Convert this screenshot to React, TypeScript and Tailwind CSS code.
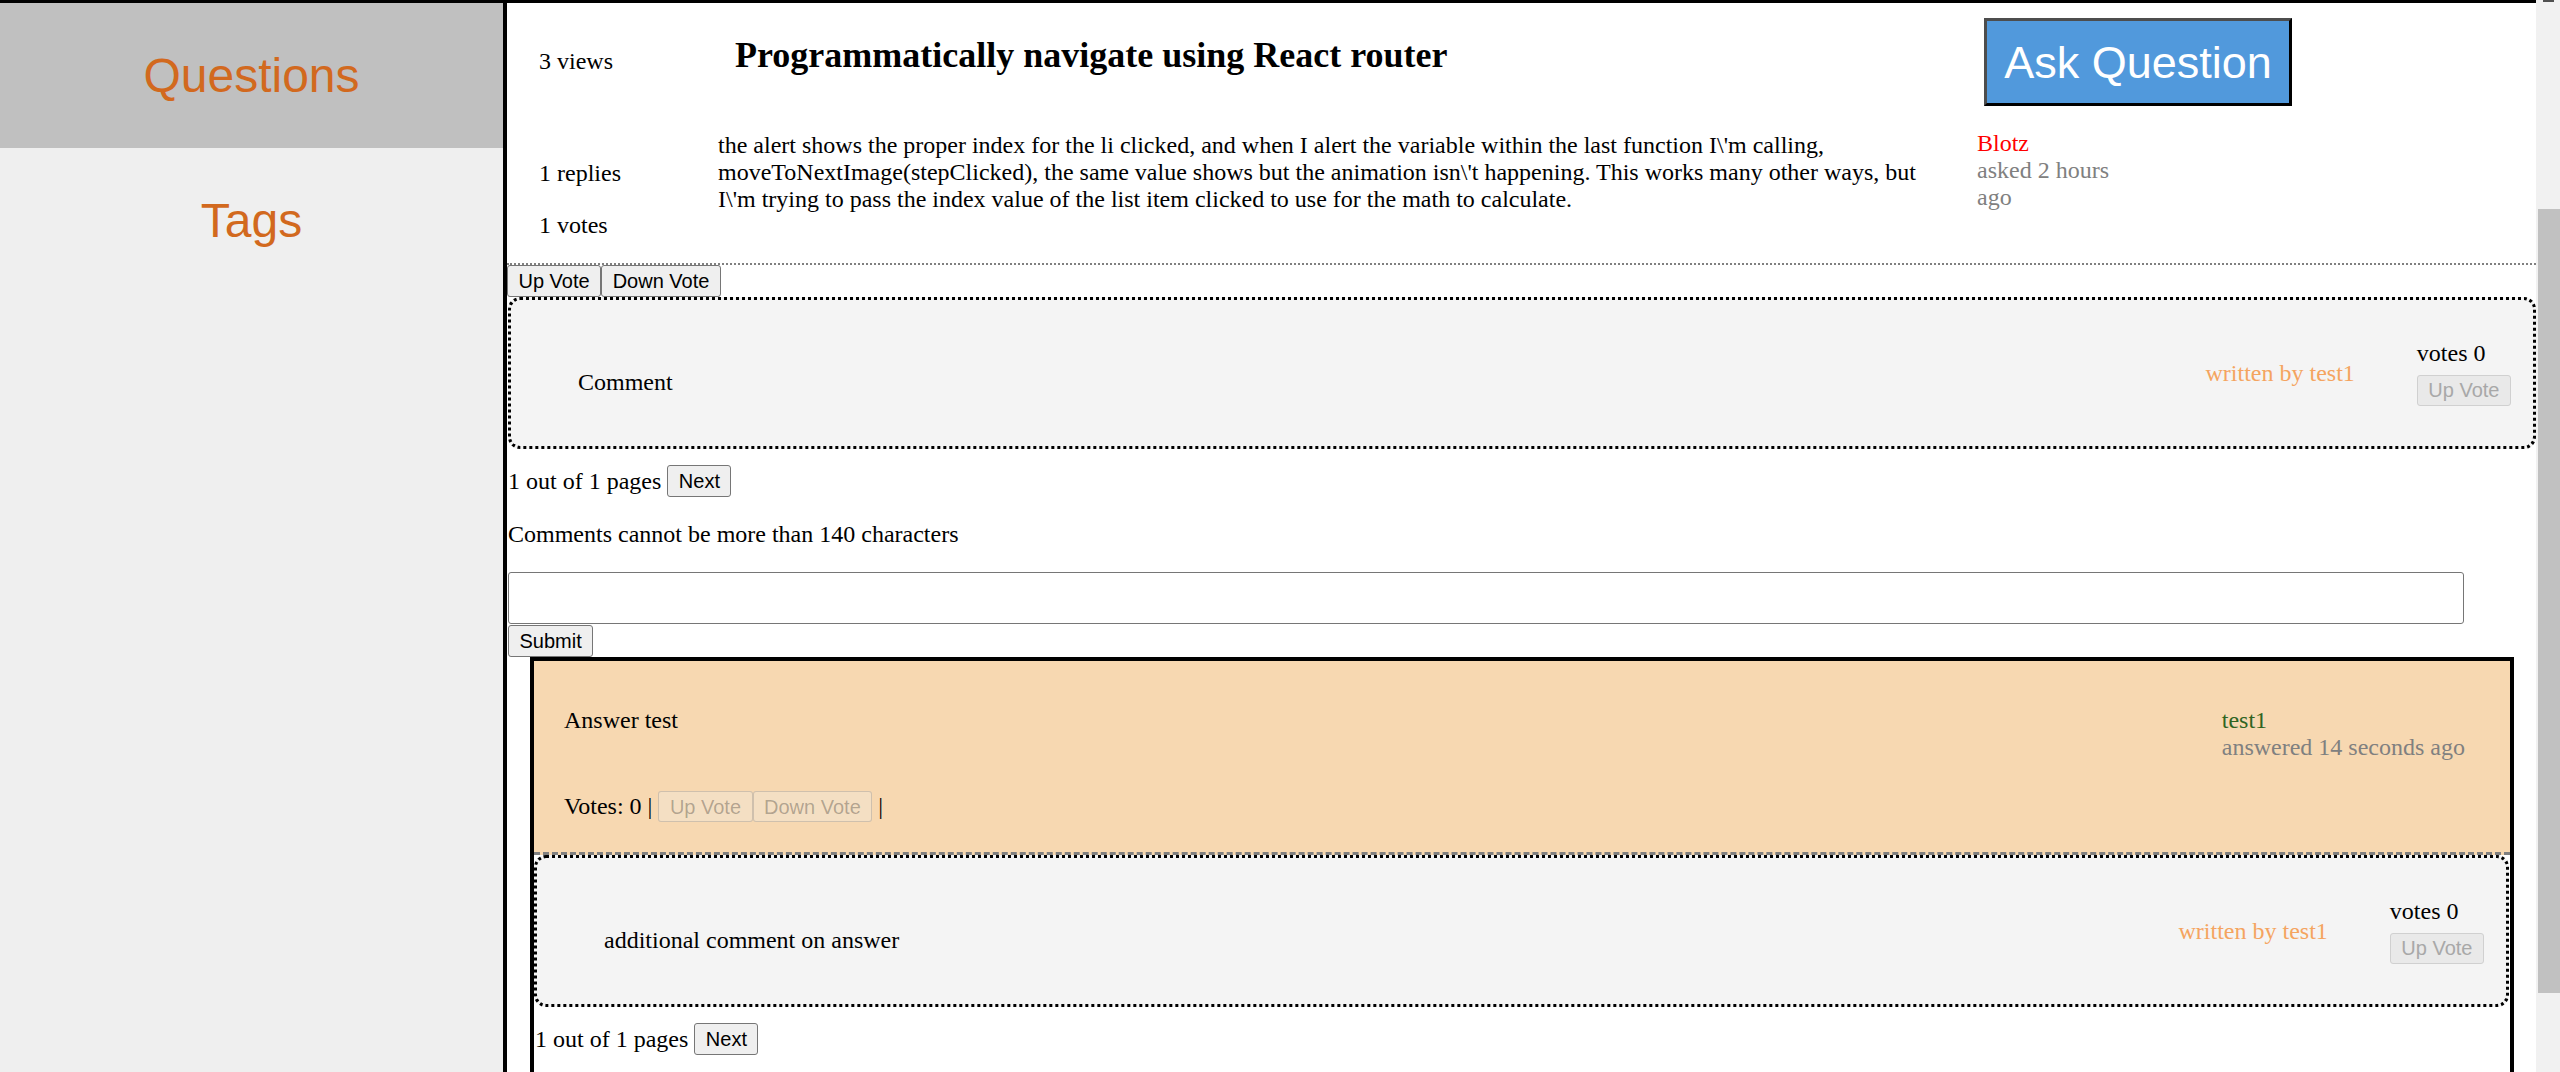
import type { ReactNode } from "react";

const body =
  "the alert shows the proper index for the li clicked, and when I alert the variable within the last function I\\'m calling, moveToNextImage(stepClicked), the same value shows but the animation isn\\'t happening. This works many other ways, but I\\'m trying to pass the index value of the list item clicked to use for the math to calculate.";

function Btn({
  children,
  look = "border-[#767676] bg-[#efefef] text-black",
  disabled = false,
  size = "h-[32px]",
  className = "",
}: {
  children: ReactNode;
  look?: string;
  disabled?: boolean;
  size?: string;
  className?: string;
}) {
  return (
    <button
      disabled={disabled}
      className={`${size} shrink-0 rounded-[3px] border px-[10.5px] font-['Liberation_Sans',sans-serif] text-[20px] leading-none ${look} ${className}`}
    >
      {children}
    </button>
  );
}

const faded = "border-[#767676]/30 bg-[#efefef]/30 text-[#101010]/30";

function CommentBox({ text, className = "" }: { text: string; className?: string }) {
  return (
    <div
      className={`flex h-[152px] items-center rounded-[12px] border-[3px] border-dotted border-black bg-[#f4f4f4] pl-[67px] pr-[22px] ${className}`}
    >
      <div className="flex-1 pt-[18px]">{text}</div>
      <div className="mr-[62px] text-[#f4a460]">written by test1</div>
      <div className="flex flex-col">
        <span>votes 0</span>
        <Btn
          disabled
          look="border-[#d0d0d0] bg-[#e9e9e9] text-[#a8a8a8]"
          size="h-[31px]"
          className="mt-[7.5px]"
        >
          Up Vote
        </Btn>
      </div>
    </div>
  );
}

function Pager({ className = "" }: { className?: string }) {
  return (
    <div className={`mt-[16px] flex items-center ${className}`}>
      <span className="mr-[6px]">1 out of 1 pages</span>
      <Btn>Next</Btn>
    </div>
  );
}

export default function App() {
  return (
    <div className="flex h-[1072px] w-[2560px] overflow-hidden bg-white font-['Liberation_Serif',serif] text-[24px] leading-[27px] text-black">
      <div className="flex min-w-0 flex-1 border-t-[3px] border-black">
        <aside className="w-[503px] shrink-0 bg-[#efefef] font-['Liberation_Sans',sans-serif] text-[48px] leading-none text-[#d2691e]">
          <div className="flex h-[145px] items-center justify-center bg-[#c0c0c0]">Questions</div>
          <div className="flex h-[145px] items-center justify-center">Tags</div>
        </aside>

        <main className="min-w-0 flex-1 border-l-4 border-black">
          {/* question header */}
          <div className="flex h-[112px]">
            <div className="w-[211px] shrink-0 pl-8 pt-[45px]">3 views</div>
            <div className="w-[1259px] shrink-0 pl-[17px] pt-[31.5px]">
              <h2 className="whitespace-nowrap text-[36px] font-bold leading-[41px]">
                Programmatically navigate using React router
              </h2>
            </div>
            <div className="pt-[15px]">
              <button className="ml-[7px] h-[88px] w-[308px] border-[3px] border-b-black border-l-[#4d4d4d] border-r-black border-t-[#4d4d4d] bg-[#5199dc] font-['Liberation_Sans',sans-serif] text-[45px] leading-none text-white">
                Ask Question
              </button>
            </div>
          </div>
          <div className="flex h-[150px] border-b-2 border-dotted border-[#808080]">
            <div className="w-[211px] shrink-0 pl-8 pt-[44.5px]">
              <p>1 replies</p>
              <p className="mt-[25px]">1 votes</p>
            </div>
            <p className="w-[1220px] shrink-0 pt-[16.5px]">{body}</p>
            <div className="ml-[39px] w-[150px] pt-[14.5px]">
              <p className="text-[#ff0000]">Blotz</p>
              <p className="text-[#808080]">asked 2 hours ago</p>
            </div>
          </div>

          <div className="flex">
            <Btn>Up Vote</Btn>
            <Btn>Down Vote</Btn>
          </div>
          <CommentBox text="Comment" className="ml-px" />
          <Pager className="ml-px" />
          <p className="ml-px mt-[24px]">Comments cannot be more than 140 characters</p>
          <input className="ml-px mt-[24px] block h-[52px] w-[1956px] rounded-[3px] border border-[#767676] bg-white" />
          <Btn className="ml-px mt-px block">Submit</Btn>

          {/* answer */}
          <div className="ml-[23px] mr-[22px] border-4 border-black">
            <div className="border-b-[3px] border-dashed border-[#808080] bg-[#f7d8b1] pb-[30px] pl-[30px] pr-[45px] pt-[45.5px]">
              <div className="flex justify-between">
                <span>Answer test</span>
                <div>
                  <p className="text-[#2f6422]">test1</p>
                  <p className="text-[#808080]">answered 14 seconds ago</p>
                </div>
              </div>
              <div className="mt-[30.5px] flex h-[31px] items-center">
                <span className="whitespace-pre">Votes: 0 | </span>
                <Btn disabled look={faded} size="h-[31px]">
                  Up Vote
                </Btn>
                <Btn disabled look={faded} size="h-[31px]">
                  Down Vote
                </Btn>
                <span className="whitespace-pre"> |</span>
              </div>
            </div>
            <CommentBox text="additional comment on answer" className="mr-px" />
            <Pager className="ml-px" />
            <div className="h-[300px]" />
          </div>
        </main>
      </div>

      {/* page scrollbar */}
      <div className="w-[24px] shrink-0 bg-[#f1f1f1] pl-[2px]">
        <div className="ml-[5px] h-[2px] w-[11px] bg-[#505050]" />
        <div className="mt-[207px] h-[784px] bg-[#c1c1c1]" />
      </div>
    </div>
  );
}
